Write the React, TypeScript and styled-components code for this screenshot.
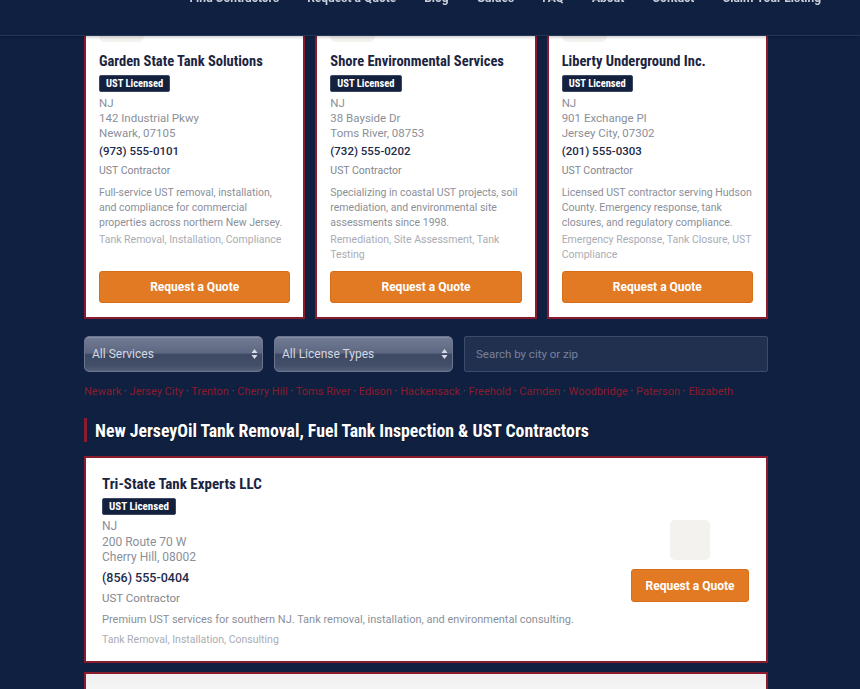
import React from 'react';
import styled, {createGlobalStyle} from 'styled-components';

const GlobalStyle = createGlobalStyle`
	html, body {
		margin: 0;
		padding: 0;
		background: #0f2040;
		overflow: hidden;
	}
	body {
		font-family: Roboto, 'Noto Sans', sans-serif;
	}
	* {
		box-sizing: border-box;
	}
`;

const headingFont = `'Liberation Sans Narrow', 'Roboto Condensed', 'DejaVu Sans Condensed', Roboto, sans-serif`;

interface Contractor {
	name: string;
	street: string;
	city: string;
	phone: string;
	description: string;
	services: string;
}

const featured: Contractor[] = [
	{
		name: 'Garden State Tank Solutions',
		street: '142 Industrial Pkwy',
		city: 'Newark, 07105',
		phone: '(973) 555-0101',
		description:
			'Full-service UST removal, installation, and compliance for commercial properties across northern New Jersey.',
		services: 'Tank Removal, Installation, Compliance',
	},
	{
		name: 'Shore Environmental Services',
		street: '38 Bayside Dr',
		city: 'Toms River, 08753',
		phone: '(732) 555-0202',
		description:
			'Specializing in coastal UST projects, soil remediation, and environmental site assessments since 1998.',
		services: 'Remediation, Site Assessment, Tank Testing',
	},
	{
		name: 'Liberty Underground Inc.',
		street: '901 Exchange Pl',
		city: 'Jersey City, 07302',
		phone: '(201) 555-0303',
		description:
			'Licensed UST contractor serving Hudson County. Emergency response, tank closures, and regulatory compliance.',
		services: 'Emergency Response, Tank Closure, UST Compliance',
	},
];

const listing: Contractor = {
	name: 'Tri-State Tank Experts LLC',
	street: '200 Route 70 W',
	city: 'Cherry Hill, 08002',
	phone: '(856) 555-0404',
	description:
		'Premium UST services for southern NJ. Tank removal, installation, and environmental consulting.',
	services: 'Tank Removal, Installation, Consulting',
};

const cities = [
	'Newark',
	'Jersey City',
	'Trenton',
	'Cherry Hill',
	'Toms River',
	'Edison',
	'Hackensack',
	'Freehold',
	'Camden',
	'Woodbridge',
	'Paterson',
	'Elizabeth',
];

const navItems = [
	'Find Contractors',
	'Request a Quote',
	'Blog',
	'Guides',
	'FAQ',
	'About',
	'Contact',
	'Claim Your Listing',
];

const SelectArrows = () => (
	<svg width="7" height="12" viewBox="0 0 7 12">
		<path d="M3.5 1 L6.5 5 H0.5 Z" fill="#d9dde6" />
		<path d="M3.5 11 L6.5 7 H0.5 Z" fill="#d9dde6" />
	</svg>
);

export default function App() {
	return (
		<>
			<GlobalStyle />
			<Header>
				<Nav>
					{navItems.map((item) => (
						<NavLink key={item}>{item}</NavLink>
					))}
				</Nav>
			</Header>
			<Main>
				<CardGrid>
					{featured.map((c) => (
						<FeaturedCard key={c.name}>
							<LogoBox />
							<CardTitle>{c.name}</CardTitle>
							<Badge>UST Licensed</Badge>
							<Location>
								<div>NJ</div>
								<div>{c.street}</div>
								<div>{c.city}</div>
							</Location>
							<Phone>{c.phone}</Phone>
							<Kind>UST Contractor</Kind>
							<Description>{c.description}</Description>
							<Services>{c.services}</Services>
							<QuoteButton $full>Request a Quote</QuoteButton>
						</FeaturedCard>
					))}
				</CardGrid>

				<Filters>
					<SelectWrap>
						<Select defaultValue="all">
							<option value="all">All Services</option>
						</Select>
						<ArrowSlot>
							<SelectArrows />
						</ArrowSlot>
					</SelectWrap>
					<SelectWrap>
						<Select defaultValue="all">
							<option value="all">All License Types</option>
						</Select>
						<ArrowSlot>
							<SelectArrows />
						</ArrowSlot>
					</SelectWrap>
					<Search placeholder="Search by city or zip" />
				</Filters>

				<CityLinks>
					{cities.map((city, i) => (
						<React.Fragment key={city}>
							{i > 0 && <Dot> · </Dot>}
							<CityLink>{city}</CityLink>
						</React.Fragment>
					))}
				</CityLinks>

				<SectionHeading>
					New JerseyOil Tank Removal, Fuel Tank Inspection &amp; UST Contractors
				</SectionHeading>

				<ListingCard>
					<ListingInfo>
						<CardTitle $large>{listing.name}</CardTitle>
						<Badge $large>UST Licensed</Badge>
						<Location $large>
							<div>NJ</div>
							<div>{listing.street}</div>
							<div>{listing.city}</div>
						</Location>
						<Phone $large>{listing.phone}</Phone>
						<Kind $large>UST Contractor</Kind>
						<Description $large>{listing.description}</Description>
						<Services $large>{listing.services}</Services>
					</ListingInfo>
					<ListingSide>
						<SmallLogo />
						<QuoteButton>Request a Quote</QuoteButton>
					</ListingSide>
				</ListingCard>

				<NextCard />
			</Main>
		</>
	);
}

const Header = styled.header`
	position: fixed;
	top: 0;
	left: 0;
	right: 0;
	z-index: 10;
	height: 36px;
	overflow: hidden;
	background: #0f2040;
	border-bottom: 1px solid #25365a;
	box-shadow: 0 1px 3px rgba(0, 0, 0, 0.25);
`;

const Nav = styled.nav`
	display: flex;
	justify-content: flex-end;
	gap: 28px;
	margin-top: -10px;
	padding-right: 39px;
`;

const NavLink = styled.a`
	font-family: Roboto, sans-serif;
	font-size: 12px;
	font-weight: 700;
	line-height: 16px;
	color: #c9ced9;
`;

const Main = styled.main`
	width: 684px;
	margin-left: 84px;
	display: flex;
	flex-direction: column;
`;

const CardGrid = styled.div`
	display: grid;
	grid-template-columns: repeat(3, 1fr);
	gap: 10px;
	margin-top: -19px;
`;

const FeaturedCard = styled.div`
	display: flex;
	flex-direction: column;
	background: #fff;
	border: 2px solid #8a1b2c;
	padding: 13px 13px 14px;
`;

const LogoBox = styled.div`
	width: 45px;
	height: 46px;
	border-radius: 6px;
	background: #f3f2ee;
	margin-bottom: 11px;
`;

const SmallLogo = styled.div`
	width: 40px;
	height: 40px;
	border-radius: 5px;
	background: #f3f2ee;
`;

const CardTitle = styled.div<{$large?: boolean}>`
	font-family: ${headingFont};
	font-size: ${(p) => (p.$large ? 15 : 14.5)}px;
	font-weight: 700;
	line-height: 18px;
	color: #1b2440;
`;

const Badge = styled.span<{$large?: boolean}>`
	align-self: flex-start;
	margin-top: ${(p) => (p.$large ? 5 : 4)}px;
	height: 17px;
	padding: 0 6px;
	display: inline-flex;
	align-items: center;
	background: #13213e;
	border: 1px solid #3b4763;
	border-radius: 2px;
	color: #fff;
	font-family: ${headingFont};
	font-size: ${(p) => (p.$large ? 11 : 10.5)}px;
	font-weight: 700;
`;

const Location = styled.div<{$large?: boolean}>`
	margin-top: 4px;
	font-size: ${(p) => (p.$large ? 12 : 11.5)}px;
	line-height: ${(p) => (p.$large ? 15.5 : 15)}px;
	color: #8b8f99;
`;

const Phone = styled.div<{$large?: boolean}>`
	margin-top: ${(p) => (p.$large ? 3 : 2)}px;
	font-size: ${(p) => (p.$large ? 12.5 : 11.5)}px;
	font-weight: 500;
	line-height: ${(p) => (p.$large ? 18 : 17)}px;
	color: #1d2a4c;
`;

const Kind = styled.div<{$large?: boolean}>`
	margin-top: 3px;
	font-size: ${(p) => (p.$large ? 11.5 : 10.5)}px;
	line-height: ${(p) => (p.$large ? 16 : 15)}px;
	color: #82868f;
`;

const Description = styled.div<{$large?: boolean}>`
	margin-top: ${(p) => (p.$large ? 6 : 7)}px;
	font-size: ${(p) => (p.$large ? 11 : 10.5)}px;
	line-height: ${(p) => (p.$large ? 16 : 15)}px;
	color: #8b8f99;
`;

const Services = styled.div<{$large?: boolean}>`
	margin-top: ${(p) => (p.$large ? 4 : 2)}px;
	margin-bottom: ${(p) => (p.$large ? 0 : 9)}px;
	font-size: 10.5px;
	line-height: ${(p) => (p.$large ? 16 : 15)}px;
	color: #a9acb3;
`;

const QuoteButton = styled.button<{$full?: boolean}>`
	margin-top: ${(p) => (p.$full ? 'auto' : '0')};
	width: ${(p) => (p.$full ? '100%' : '118px')};
	height: ${(p) => (p.$full ? 32 : 33)}px;
	flex-shrink: 0;
	border: 1px solid #d86d17;
	border-radius: 3px;
	background: #e27a24;
	color: #fff;
	font-family: Roboto, sans-serif;
	font-size: 12px;
	font-weight: 700;
	cursor: pointer;
`;

const Filters = styled.div`
	display: grid;
	grid-template-columns: 179px 179px 1fr;
	gap: 11px;
	margin-top: 17px;
	height: 36px;
`;

const SelectWrap = styled.div`
	position: relative;
`;

const Select = styled.select`
	appearance: none;
	width: 100%;
	height: 36px;
	padding: 0 20px 0 7px;
	border: 1px solid #6b7590;
	border-radius: 5px;
	background: linear-gradient(
		to bottom,
		#717b93 0%,
		#5e6882 46%,
		#3e4964 52%,
		#434e69 85%,
		#56617b 100%
	);
	box-shadow: inset 0 1px 0 rgba(255, 255, 255, 0.15);
	color: #d4d8e1;
	font-family: Roboto, sans-serif;
	font-size: 12px;
`;

const ArrowSlot = styled.span`
	position: absolute;
	right: 5px;
	top: 12px;
	display: flex;
	pointer-events: none;
`;

const Search = styled.input`
	height: 36px;
	padding: 0 11px;
	border: 1px solid #3c4b6b;
	border-radius: 2px;
	background: #22304f;
	color: #d4d8e1;
	font-family: Roboto, sans-serif;
	font-size: 11.5px;
	outline: none;

	&::placeholder {
		color: #77829b;
	}
`;

const CityLinks = styled.div`
	margin-top: 12px;
	font-size: 11px;
	line-height: 15px;
	white-space: nowrap;
`;

const CityLink = styled.a`
	color: #8a1c2e;
`;

const Dot = styled.span`
	color: #55617c;
`;

const SectionHeading = styled.h2`
	margin: 19px 0 0;
	height: 24px;
	display: flex;
	align-items: center;
	border-left: 3px solid #8a1b2c;
	padding-left: 8px;
	font-family: ${headingFont};
	font-size: 17.8px;
	font-weight: 700;
	color: #fff;
	white-space: nowrap;
	text-shadow: 0 1px 1px rgba(0, 0, 0, 0.4);
`;

const ListingCard = styled.div`
	margin-top: 14px;
	display: flex;
	align-items: center;
	justify-content: space-between;
	background: #fff;
	border: 2px solid #8a1b2c;
	padding: 17px 17px 13px 16px;
`;

const ListingInfo = styled.div`
	display: flex;
	flex-direction: column;
`;

const ListingSide = styled.div`
	display: flex;
	flex-direction: column;
	align-items: center;
	gap: 9px;
`;

const NextCard = styled.div`
	margin-top: 9px;
	height: 120px;
	border: 2px solid #8a1b2c;
	background: linear-gradient(to bottom, #efefef 0%, #f6f6f6 20px, #fff 60px);
`;
